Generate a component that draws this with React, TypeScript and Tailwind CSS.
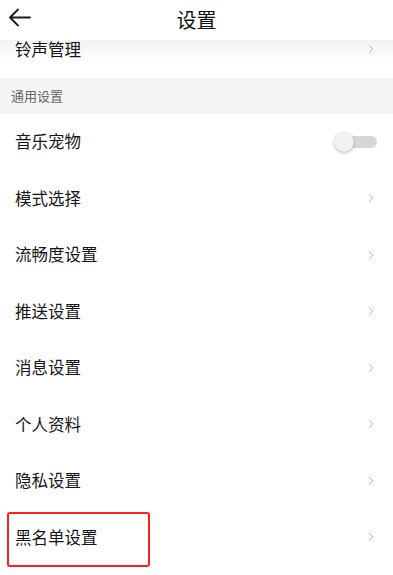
import { ChevronRight } from 'lucide-react'

const rows: { label: string; toggle?: boolean; marked?: boolean }[] = [
  { label: '音乐宠物', toggle: true },
  { label: '模式选择' },
  { label: '流畅度设置' },
  { label: '推送设置' },
  { label: '消息设置' },
  { label: '个人资料' },
  { label: '隐私设置' },
  { label: '黑名单设置', marked: true },
]

function Row({ label, toggle, marked, faded }: { label: string; toggle?: boolean; marked?: boolean; faded?: boolean }) {
  return (
    <div
      className={`relative flex h-[56.5px] shrink-0 items-center justify-between pl-[15px] pr-[15px] ${
        faded ? 'bg-gradient-to-b from-[#f2f2f2] from-30% to-white to-70%' : 'bg-white'
      }`}
    >
      <span className="text-[16.5px] text-[#151515]">{label}</span>
      {toggle ? (
        <div className="relative mr-[1px] h-[20px] w-[43px]">
          <div className="absolute right-0 top-[4px] h-[12px] w-[34px] rounded-full bg-[#d6d6d6]" />
          <div className="absolute left-0 top-0 h-[20px] w-[20px] rounded-full bg-[#f1f1f1] shadow-[0_1px_3px_rgba(0,0,0,0.3)]" />
        </div>
      ) : (
        <ChevronRight size={14} strokeWidth={1.6} className="text-[#a8a8a8]" />
      )}
      {marked && (
        <div className="absolute left-[7px] top-[2.5px] h-[55px] w-[143px] rounded-[3px] border-2 border-[#ff1f1f]" />
      )}
    </div>
  )
}

export default function App() {
  return (
    <div
      className="flex h-[575px] w-[393px] flex-col overflow-hidden bg-white"
      style={{ fontFamily: '"Noto Sans CJK SC", "Noto Sans", sans-serif' }}
    >
      <header className="relative z-10 flex h-10 shrink-0 items-center justify-center bg-white">
        <svg
          className="absolute left-[8px] top-[8px]"
          width="24"
          height="20"
          viewBox="0 0 24 20"
          fill="none"
          stroke="#1a1a1a"
          strokeWidth="1.8"
          strokeLinecap="round"
          strokeLinejoin="round"
        >
          <path d="M22 9.5H2M10 1.5L2 9.5L10 17.5" />
        </svg>
        <h1 className="text-[20px] leading-none text-[#111]">设置</h1>
      </header>

      <div className="-mt-[19px] flex flex-col">
        <Row label="铃声管理" faded />
        <div className="flex h-[36px] shrink-0 items-center bg-[#f5f5f5] pl-[11px] text-[13px] text-[#666]">
          通用设置
        </div>
        {rows.map((r) => (
          <Row key={r.label} {...r} />
        ))}
      </div>
    </div>
  )
}
